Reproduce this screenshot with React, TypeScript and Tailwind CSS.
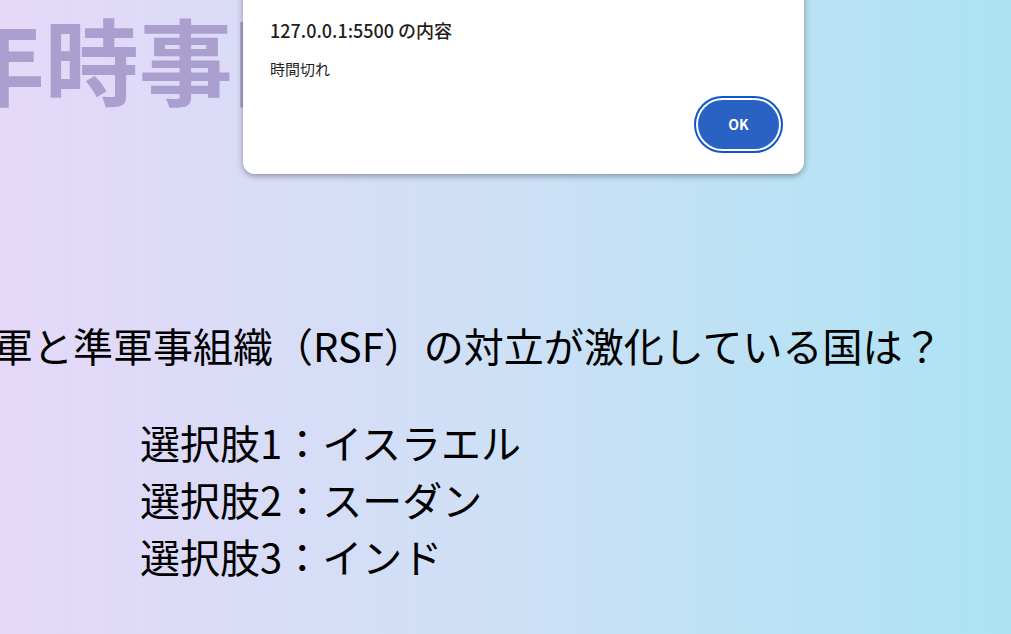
export default function App() {
  const options = ['選択肢1：イスラエル', '選択肢2：スーダン', '選択肢3：インド'];

  return (
    <main
      className="relative h-[634px] w-full overflow-hidden bg-gradient-to-r from-[#e5d8f8] via-[#cde0f6] to-[#abe3f3] text-black"
      style={{ fontFamily: '"Noto Sans CJK JP", "Noto Sans", sans-serif' }}
    >
      <div className="ml-[-140px] flex w-[1200px] flex-col">
        <h1 className="mt-[-2px] ml-[-131px] whitespace-nowrap text-[94px] font-bold leading-[120px] text-[#ab9fcf]">
          2025年時事問題クイズ
        </h1>

        <p className="mt-[199px] whitespace-nowrap pl-[93px] text-[40px] leading-[57px]">
          国軍と準軍事組織（RSF）の対立が激化している国は？
        </p>

        <ul className="mt-[40px] flex flex-col pl-[280px]">
          {options.map((o) => (
            <li key={o} className="whitespace-nowrap text-[40px] leading-[57px]">
              {o}
            </li>
          ))}
        </ul>
      </div>

      {/* alert dialog */}
      <div className="absolute left-[243px] top-[-20px] flex h-[194px] w-[561px] flex-col rounded-xl bg-white px-[27px] pt-[38px] shadow-[0_2px_6px_rgba(0,0,0,0.35)]">
        <div className="text-[18px] font-medium leading-[24px] text-[#1f1f1f]">127.0.0.1:5500 の内容</div>
        <div className="mt-[17px] text-[15px] leading-[20px] text-[#1f1f1f]">時間切れ</div>
        <div className="mt-auto mb-[21px] mr-[-6px] flex justify-end">
          <div className="rounded-full border-2 border-[#0b57d0] p-[2px]">
            <button className="h-[49px] w-[81px] rounded-full bg-[#2a62c3] text-[14px] font-bold text-white">
              OK
            </button>
          </div>
        </div>
      </div>
    </main>
  );
}
